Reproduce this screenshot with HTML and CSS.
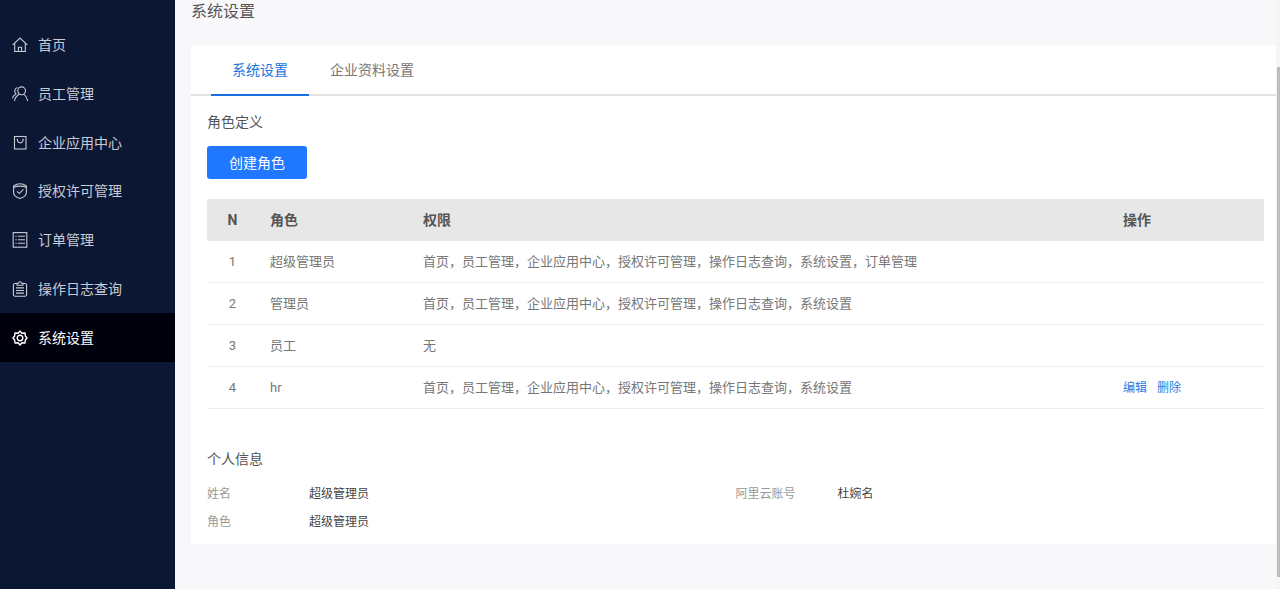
FILE: index.html
```html
<!DOCTYPE html>
<html lang="zh-CN">
<head>
<meta charset="utf-8">
<title>系统设置</title>
<link rel="stylesheet" href="styles.css">
</head>
<body>
<div class="app">
  <nav class="sidebar" aria-label="主导航">
    <ul class="menu">
      <li><a class="menu-link" href="#home"><svg class="icon" viewBox="0 0 16 16"><path d="M.7 7.8 8 1l7.3 6.8M2.7 6.3v8.2h10.6V6.3M6.4 14.3v-4h3.2v4"/></svg>首页</a></li>
      <li><a class="menu-link" href="#staff"><svg class="icon" viewBox="0 0 16 16"><circle cx="9.6" cy="4.8" r="3.9"/><path d="M5.6 1.5a3.7 3.7 0 0 0-1.3 6.6M4.3 8.1C2.100 9 .9 10.300.4 12.400M2.500 15c.4-3.300 2.200-5.300 4.800-6.800M11.600 8.200c2.300 1.400 3.500 3.500 4 6.800"/></svg>员工管理</a></li>
      <li><a class="menu-link" href="#apps"><svg class="icon" viewBox="0 0 16 16"><rect x="2.500" y="1.500" width="11.500" height="12.500"/><path d="M5.300 4.300c.3 4.700 5.600 4.700 5.900 0M4.700 4.200h1.200M10.600 4.200h1.200"/></svg>企业应用中心</a></li>
      <li><a class="menu-link" href="#license"><svg class="icon" viewBox="0 0 16 16"><path d="M8 .7C5.500.7 3.500 1.500 1.600 3v6.500c0 3.500 3 5 6.400 6 3.400-1 6.400-2.500 6.400-6V3C12.500 1.500 10.500.7 8 .7ZM1.600 4.500C5 2.600 11 2.600 14.400 4.500M4.900 8.300l2.400 2.300 4.100-4.200"/></svg>授权许可管理</a></li>
      <li><a class="menu-link" href="#orders"><svg class="icon" viewBox="0 0 16 16"><rect x="1.200" y=".6" width="13.600" height="14.600"/><path d="M3.400 4.300h1.300M6 4.300h7M3.400 7.800h1.300M6 7.800h7M3.400 11.300h1.300M6 11.300h7"/></svg>订单管理</a></li>
      <li><a class="menu-link" href="#logs"><svg class="icon" viewBox="0 0 16 16"><path d="M5 2.500H3A1.600 1.600 0 0 0 1.400 4v9.500A1.600 1.600 0 0 0 3 15.200h10a1.600 1.600 0 0 0 1.600-1.700V4A1.600 1.600 0 0 0 13 2.500h-2M5 4.300V2.300h1.500C6.700.3 9.300.3 9.500 2.300H11v2ZM4 6.900h8M4 9.500h8M4 12.100h8"/></svg>操作日志查询</a></li>
      <li><a class="menu-link active" href="#settings" aria-current="page"><svg class="icon icon-bold" viewBox="0 0 16 16"><path d="M8 1 9.900 3.200 13 3 13.400 6 15 8 13.400 10 13 13 9.900 12.800 8 15 6.100 12.800 3 13 2.600 10 1 8 2.600 6 3 3 6.100 3.200Z"/><circle cx="8" cy="8" r="2.800"/></svg>系统设置</a></li>
    </ul>
  </nav>
  <main class="main">
    <h1 class="page-title">系统设置</h1>
    <section class="card">
      <div class="tabs" role="tablist">
        <button class="tab selected" type="button" role="tab" aria-selected="true">系统设置</button>
        <button class="tab" type="button" role="tab" aria-selected="false">企业资料设置</button>
      </div>
      <div class="card-body">
        <h2 class="section-title">角色定义</h2>
        <button class="primary" type="button">创建角色</button>
        <table class="roles">
          <colgroup><col class="col-no"><col class="col-role"><col><col class="col-action"></colgroup>
          <thead><tr><th>N</th><th>角色</th><th>权限</th><th>操作</th></tr></thead>
          <tbody>
            <tr><td>1</td><td>超级管理员</td><td>首页，员工管理，企业应用中心，授权许可管理，操作日志查询，系统设置，订单管理</td><td></td></tr>
            <tr><td>2</td><td>管理员</td><td>首页，员工管理，企业应用中心，授权许可管理，操作日志查询，系统设置</td><td></td></tr>
            <tr><td>3</td><td>员工</td><td>无</td><td></td></tr>
            <tr><td>4</td><td>hr</td><td>首页，员工管理，企业应用中心，授权许可管理，操作日志查询，系统设置</td><td><div class="actions"><a href="#edit">编辑</a><a href="#delete">删除</a></div></td></tr>
          </tbody>
        </table>
        <h2 class="section-title">个人信息</h2>
        <dl class="profile">
          <div class="field"><dt>姓名</dt><dd>超级管理员</dd></div>
          <div class="field"><dt>阿里云账号</dt><dd>杜婉名</dd></div>
          <div class="field"><dt>角色</dt><dd>超级管理员</dd></div>
        </dl>
      </div>
    </section>
  </main>
  <div class="scroll-track" aria-hidden="true"><div class="scroll-thumb"></div></div>
</div>
</body>
</html>
```
FILE: styles.css
```css
* {
  box-sizing: border-box;
}

body {
  margin: 0;
  background: #f8f8fb;
  color: #666;
  font-family: Roboto, "Noto Sans CJK SC", sans-serif;
  font-size: 14px;
  line-height: 20px;
}

h1, h2, ul, dl, dd {
  margin: 0;
  padding: 0;
  font-weight: 400;
}

a {
  text-decoration: none;
}

button {
  border: 0;
  font: inherit;
}

.app {
  display: flex;
  min-height: 100vh;
}

.sidebar {
  flex: 0 0 175px;
  padding-top: 21px;
  background: #0c1734;
}

.menu {
  display: grid;
  grid-auto-rows: 1fr;
  height: 341px;
  list-style: none;
}

.menu-link {
  display: flex;
  align-items: center;
  gap: 10px;
  height: 100%;
  padding-left: 12px;
  color: #c8cbd4;
}

.menu-link.active {
  background: #00000c;
  color: #fff;
}

.icon {
  width: 16px;
  height: 16px;
  fill: none;
  stroke: currentColor;
  stroke-width: 1.1;
}

.icon-bold {
  stroke-width: 1.4;
  stroke-linejoin: round;
}

.main {
  flex: 1;
  min-width: 0;
  padding-left: 16px;
}

.page-title {
  padding-bottom: 22px;
  color: #555;
  font-size: 16px;
  line-height: 24px;
}

.card {
  background: #fff;
}

.tabs {
  display: flex;
  height: 50px;
  padding-left: 20px;
  box-shadow: inset 0 -2px #e2e2e2;
}

.tab {
  padding: 0 21px;
  border-bottom: 2px solid transparent;
  background: none;
  color: #777;
}

.tab.selected {
  border-color: #1a6fe0;
  color: #1a73e0;
}

.card-body {
  padding: 16px 12px 8px 16px;
}

.section-title {
  color: #555;
  font-size: 14px;
}

.primary {
  width: 100px;
  height: 33px;
  margin: 14px 0 20px;
  border-radius: 3px;
  background: #1f78ff;
  color: #fff;
}

.roles {
  width: 100%;
  margin-bottom: 40px;
  border-spacing: 0;
  table-layout: fixed;
  color: #777;
  font-size: 13px;
}

.col-no {
  width: 51px;
}

.col-role,
.col-action {
  width: 153px;
}

.roles th,
.roles td {
  height: 42px;
  padding: 0 12px;
  text-align: left;
}

.roles th {
  background: #e7e7e7;
  color: #555;
  font-size: 14px;
}

.roles td {
  border-bottom: 1px solid #eee;
}

.roles th:first-child,
.roles td:first-child {
  text-align: center;
}

.actions {
  display: flex;
  gap: 10px;
  font-size: 12px;
}

.actions a {
  color: #2a7ce0;
}

.profile {
  display: grid;
  grid-template-columns: 1fr 1fr;
  padding-top: 11px;
  font-size: 12px;
  line-height: 28px;
}

.field {
  display: flex;
}

.field dt {
  flex: 0 0 102px;
  color: #999;
}

.field dd {
  color: #444;
}

.scroll-track {
  flex: 0 0 4px;
  padding: 67px 0 12px 1px;
  background: #f5f5f5;
}

.scroll-thumb {
  height: 100%;
  background: #bdbdbd;
}
```
